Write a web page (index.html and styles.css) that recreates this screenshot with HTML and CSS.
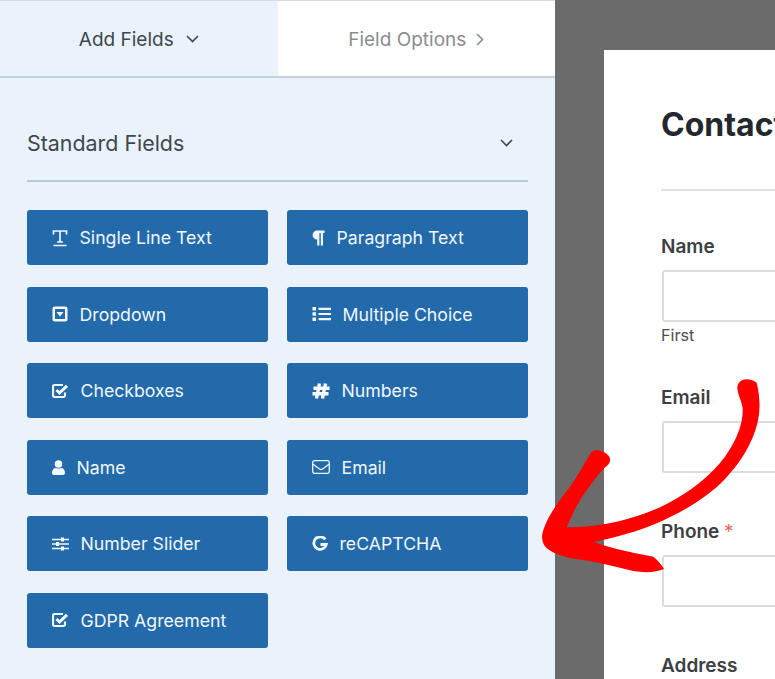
FILE: index.html
```html
<!DOCTYPE html>
<html lang="en">
<head>
  <meta charset="UTF-8" />
  <title>Add Fields</title>
  <link rel="stylesheet" href="styles.css">
</head>
<body>
  <div class="builder">
    <div class="sidebar">
      <div class="tabs">
        <div class="tab tab-active">
          Add Fields
          <svg class="chev" width="13" height="8" viewBox="0 0 13 8"><path d="M1 1l5.500 5.500L12 1"/></svg>
        </div>
        <div class="tab tab-options">
          Field Options
          <svg class="chev" width="8" height="13" viewBox="0 0 8 13"><path d="M1 1l5.500 5.500L1 12"/></svg>
        </div>
      </div>
      <div class="group">
        <div class="group-head">
          <span>Standard Fields</span>
          <svg class="chev" width="13" height="8" viewBox="0 0 13 8"><path d="M1 1l5.500 5.500L12 1"/></svg>
        </div>
        <div class="field-grid">
          <button class="field-btn">
            <svg width="16" height="18" viewBox="0 0 16 18"><path class="line" d="M1.500 5.500V2h13v3.500M8 2v11M5 13h6M1.500 16.500h13"/></svg>
            Single Line Text
          </button>
          <button class="field-btn">
            <svg width="13" height="16" viewBox="0 0 13 16"><path class="fill" d="M5 .5H12.500V3H11V15.500H8.800V3H7.400V15.500H5.200V9.500A4.500 4.500 0 0 1 5 .5z"/></svg>
            Paragraph Text
          </button>
          <button class="field-btn">
            <svg width="16" height="16" viewBox="0 0 16 16"><path class="fill" fill-rule="evenodd" d="M3 .5h10A2.500 2.500 0 0 1 15.500 3v10a2.500 2.500 0 0 1-2.500 2.500H3A2.500 2.500 0 0 1 .5 13V3A2.500 2.500 0 0 1 3 .5zm0 2.500v10h10V3zM4.500 6h7L8 10.500z"/></svg>
            Dropdown
          </button>
          <button class="field-btn">
            <svg width="19" height="16" viewBox="0 0 19 16"><path class="fill" d="M.5 1h3.500v3.500H.5zM.5 6.200h3.500v3.500H.5zM.5 11.500h3.500V15H.5z"/><path class="thick" d="M6.500 2.800h12.500M6.500 8h12.500M6.500 13.200h12.500"/></svg>
            Multiple Choice
          </button>
          <button class="field-btn">
            <svg width="17" height="16" viewBox="0 0 17 16"><path class="thick" d="M11 2H2.500A1.500 1.500 0 0 0 1 3.500v9A1.500 1.500 0 0 0 2.500 14h9a1.500 1.500 0 0 0 1.500-1.500V9.500"/><path class="check" d="M4.500 7L7.500 10 15 2.800"/></svg>
            Checkboxes
          </button>
          <button class="field-btn">
            <svg width="18" height="18" viewBox="0 0 18 18"><path class="hash" d="M7.500 1.500L4.500 16.500M13.500 1.500l-3 15M1.500 6.200h16M.5 11.800h16"/></svg>
            Numbers
          </button>
          <button class="field-btn">
            <svg width="13" height="15" viewBox="0 0 13 15"><circle class="fill" cx="6.500" cy="4" r="3.800"/><path class="fill" d="M0 13c0-3 1.500-5 4-5 1.500.800 3.500.800 5 0 2.500 0 4 2 4 5 0 1.200-.800 2-2 2H2c-1.200 0-2-.800-2-2z"/></svg>
            Name
          </button>
          <button class="field-btn">
            <svg width="18" height="14" viewBox="0 0 18 14"><rect class="thin" x=".7" y=".7" width="16.600" height="12.600" rx="1.800"/><path class="thin" d="M1 4.200l6.500 4.800c1 .700 2 .700 3 0L17 4.200"/></svg>
            Email
          </button>
          <button class="field-btn">
            <svg width="17" height="14" viewBox="0 0 17 14"><path class="line" d="M0 2.500h17M0 7h17M0 11.500h17"/><path class="fill" d="M9 .500h3v4H9zM4 5h3v4H4zM9 9.500h3v4H9z"/></svg>
            Number Slider
          </button>
          <button class="field-btn">
            <svg width="16" height="16" viewBox="0 0 16 16"><path class="g" d="M13.300 3.400A6.300 6.300 0 1 0 14.300 8.500H8.500"/></svg>
            reCAPTCHA
          </button>
          <button class="field-btn">
            <svg width="17" height="16" viewBox="0 0 17 16"><path class="thick" d="M11 2H2.500A1.500 1.500 0 0 0 1 3.500v9A1.500 1.500 0 0 0 2.500 14h9a1.500 1.500 0 0 0 1.500-1.500V9.500"/><path class="check" d="M4.500 7L7.500 10 15 2.800"/></svg>
            GDPR Agreement
          </button>
        </div>
      </div>
    </div>
    <div class="canvas">
      <div class="form-card">
        <h2 class="form-title">Contact</h2>
        <div class="form-field field-sub">
          <label>Name</label>
          <div class="input"></div>
          <div class="sublabel">First</div>
        </div>
        <div class="form-field">
          <label>Email</label>
          <div class="input"></div>
        </div>
        <div class="form-field">
          <label>Phone <span class="req">*</span></label>
          <div class="input"></div>
        </div>
        <div class="form-field">
          <label>Address</label>
        </div>
      </div>
    </div>
    <svg class="arrow" width="245" height="230" viewBox="0 0 735 690">
      <path d="M622 50C625 30 650 18 680 38C690 80 692 120 682 160C668 220 630 280 585 327C530 385 450 430 375 462C320 485 265 500 192 516C225 530 290 545 370 560C385 572 395 585 402 597C380 607 345 609 310 603C260 592 210 578 160 570C115 566 75 555 50 535C35 520 33 500 40 480C55 435 85 395 120 350C145 315 165 275 185 245C200 236 225 242 238 260C245 275 235 285 225 292C195 325 165 365 145 400C130 425 120 450 110 472C150 472 190 468 225 462C290 450 350 432 410 402C480 365 540 320 585 260C620 210 640 160 638 115C635 90 622 75 622 50z"/>
    </svg>
  </div>
</body>
</html>
```

FILE: styles.css
```css
html, body {
  margin: 0;
  padding: 0;
}
body {
  font-family: 'Inter', 'Liberation Sans', sans-serif;
  color: #3f4750;
}
.builder {
  position: relative;
  display: flex;
  width: 775px;
  height: 679px;
  overflow: hidden;
}
.sidebar {
  width: 555px;
  flex-shrink: 0;
  background-color: #eaf2fb;
  box-shadow: inset 0 1px 0 #d5dbe2;
}
.tabs {
  display: flex;
  height: 76px;
  border-bottom: 2px solid #c6d0da;
}
.tab {
  flex: 1;
  display: flex;
  align-items: center;
  justify-content: center;
  gap: 12px;
  font-size: 19px;
  padding-top: 2px;
}
.tab-options {
  background-color: #fff;
  color: #8a8d90;
  gap: 10px;
  margin-top: 1px;
  padding-top: 1px;
}
.chev {
  fill: none;
  stroke: currentColor;
  stroke-width: 1.6;
}
.group {
  padding: 0 27px;
}
.group-head {
  display: flex;
  align-items: center;
  justify-content: space-between;
  width: 501px;
  height: 104px;
  margin-bottom: 28px;
  padding: 28px 15px 0 0;
  box-sizing: border-box;
  font-size: 21.400px;
  border-bottom: 2px solid #bcc6d0;
}
.field-grid {
  display: grid;
  grid-template-columns: 241px 241px;
  column-gap: 19px;
  row-gap: 21.500px;
  width: 501px;
}
.field-btn {
  display: flex;
  align-items: center;
  gap: 11.500px;
  height: 55px;
  padding: 0 0 0 25px;
  font-family: inherit;
  font-size: 17.700px;
  color: #f1f6fb;
  background-color: #236aab;
  border: none;
  border-radius: 3px;
}
.field-btn svg {
  flex-shrink: 0;
}
.fill {
  fill: #f4f8fc;
}
.line {
  fill: none;
  stroke: #f1f6fb;
  stroke-width: 1.700;
}
.thin {
  fill: none;
  stroke: #f1f6fb;
  stroke-width: 1.300;
}
.thick {
  fill: none;
  stroke: #f1f6fb;
  stroke-width: 2.200;
}
.check {
  fill: none;
  stroke: #f8fbfe;
  stroke-width: 3;
}
.hash {
  fill: none;
  stroke: #fff;
  stroke-width: 3.400;
}
.g {
  fill: none;
  stroke: #f4f8fc;
  stroke-width: 2.800;
}
.canvas {
  flex: 1;
  background-color: #6b6b6b;
  padding: 50px 0 0 49px;
}
.form-card {
  width: 300px;
  height: 660px;
  box-sizing: border-box;
  padding-left: 57px;
  background-color: #fff;
}
.form-title {
  margin: 0 0 42px;
  height: 141px;
  padding-top: 53px;
  box-sizing: border-box;
  width: 300px;
  font-size: 32px;
  line-height: 44px;
  font-weight: 700;
  color: #23282c;
  white-space: nowrap;
  border-bottom: 2px solid #e3e3e3;
}
.form-field {
  margin-bottom: 45px;
}
.field-sub {
  margin-bottom: 38px;
}
.form-field label {
  display: block;
  font-size: 19px;
  line-height: 28px;
  font-weight: 600;
  color: #3c4043;
}
.input {
  width: 300px;
  height: 48px;
  margin: 9px 0 0 1px;
  border: 2px solid #dcdcdc;
  border-radius: 3px;
}
.sublabel {
  margin-top: 2px;
  font-size: 16.200px;
  line-height: 22px;
  color: #4d4f52;
}
.req {
  color: #e06a6a;
  font-weight: 400;
}
.arrow {
  position: absolute;
  left: 530px;
  top: 370px;
  fill: #fe0000;
}
```
